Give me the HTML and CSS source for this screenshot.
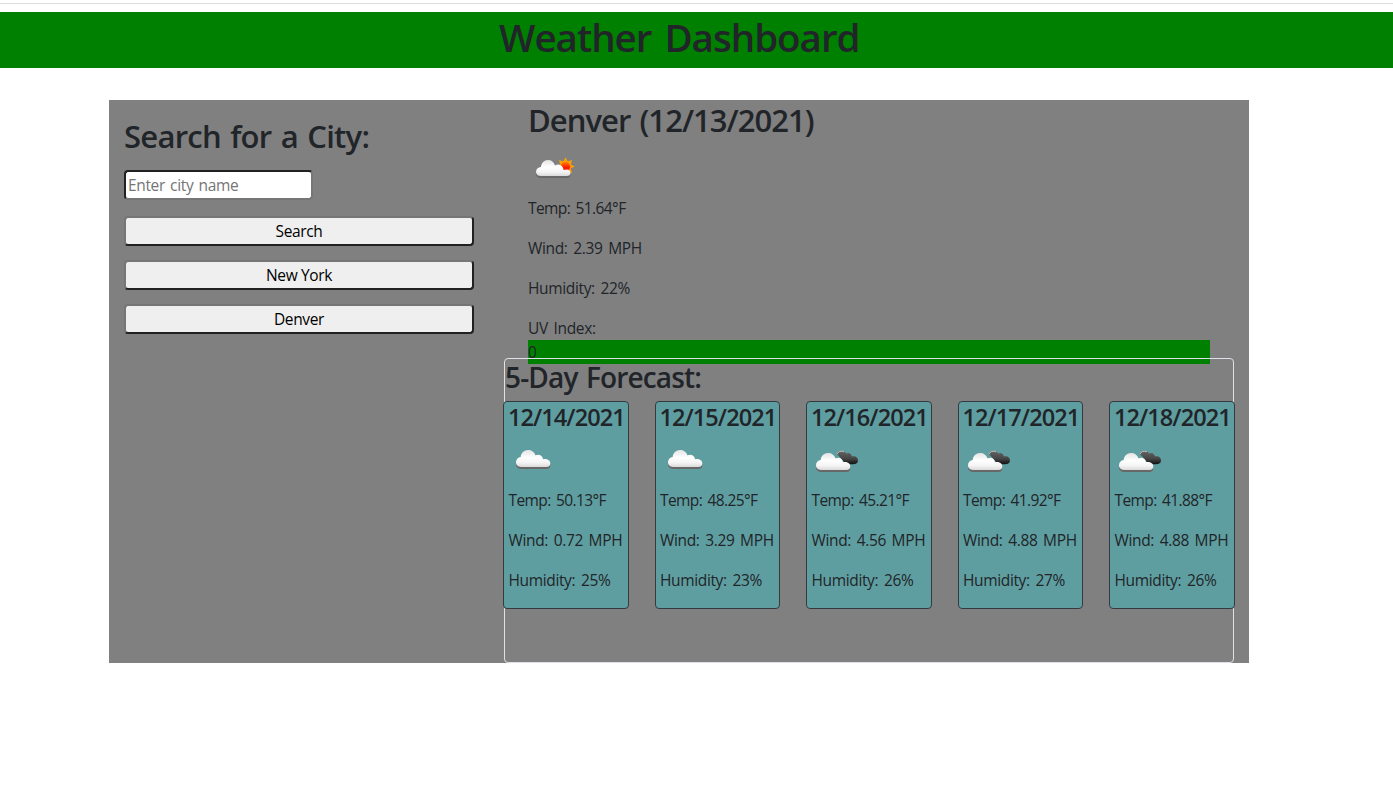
FILE: index.html
```html
<!DOCTYPE html>
<html lang="en">
<head>
<meta charset="utf-8">
<title>Weather Dashboard</title>
<link rel="stylesheet" href="styles.css">
</head>
<body>
<svg class="defs" aria-hidden="true">
  <defs>
    <linearGradient id="white" x1="0" y1="0" x2="0" y2="1"><stop offset="0" stop-color="#e4e4e4"/><stop offset=".45" stop-color="#fff"/><stop offset=".75" stop-color="#f4f4f4"/><stop offset="1" stop-color="#dadada"/></linearGradient>
    <linearGradient id="dark" x1="0" y1="0" x2="0" y2="1"><stop offset="0" stop-color="#666"/><stop offset=".6" stop-color="#444"/><stop offset="1" stop-color="#111"/></linearGradient>
    <linearGradient id="sun" x1="0" y1="0" x2="0" y2="1"><stop offset="0" stop-color="#ff8a00"/><stop offset=".6" stop-color="#ff1800"/></linearGradient>
    <path id="cloud" d="M5 17C2 17 0 15 0 12.300C0 9.300 2 7.300 4.700 7C5 3 8 0 12 0C15.500 0 18.500 2 19.300 5.300C23 3.500 26.800 5.500 27 9.300C31 8.500 34.300 10.500 34.300 13.500C34.300 15.700 33 17 30.500 17Z"/>
    <symbol id="cloudy" viewBox="0 0 50 50">
      <use href="#cloud" x="8" y="17" fill="#686868"/>
      <use href="#cloud" x="8" y="15" fill="url(#white)"/>
    </symbol>
    <symbol id="sunny" viewBox="0 0 50 50">
      <path fill="#ffa000" d="M46.800 23.500L42.600 25.600L44.100 30.100L39.600 28.600L37.500 32.800L35.400 28.600L30.900 30.100L32.400 25.600L28.200 23.500L32.400 21.400L30.900 16.900L35.400 18.400L37.500 14.200L39.600 18.400L44.100 16.900L42.600 21.400Z"/>
      <circle cx="37.500" cy="23.500" r="5" fill="url(#sun)" stroke="#ffa000"/>
      <path fill="#686868" transform="translate(0 2)" d="M13 33C10 33 8 31.500 8 28.700C8 26 10 24.500 13 24C13.300 20 16 17 20 17C23.500 17 26 19 27 22.500C31 20 35.500 23 35.500 27C39.500 25.500 42.500 27 42.500 30C42.500 32 41 33 39 33Z"/>
      <path fill="url(#white)" d="M13 33C10 33 8 31.500 8 28.700C8 26 10 24.500 13 24C13.300 20 16 17 20 17C23.500 17 26 19 27 22.500C31 20 35.500 23 35.500 27C39.500 25.500 42.500 27 42.500 30C42.500 32 41 33 39 33Z"/>
    </symbol>
    <symbol id="broken" viewBox="0 0 50 50">
      <path fill="url(#dark)" d="M26 19C26.500 16.500 28.500 15.500 31 15.800C33 16 34.500 17 35 18.500C38 17 40.500 19 41 21.500C44.500 20.500 47 22.500 47 25.500C47 28 45 29.300 42 29.300H35Z"/>
      <path fill="none" stroke="#c4c4c4" d="M26 19C27 16.500 30 15.500 33 16.700"/>
      <use href="#cloud" x="5" y="20" fill="#686868"/>
      <use href="#cloud" x="5" y="18" fill="url(#white)"/>
    </symbol>
  </defs>
</svg>
<div class="rule"></div>
<header class="banner"><h1>Weather Dashboard</h1></header>
<main class="dashboard">
  <aside class="search">
    <h2>Search for a City:</h2>
    <input class="field" type="text" placeholder="Enter city name">
    <button>Search</button>
    <button>New York</button>
    <button>Denver</button>
  </aside>
  <section class="weather">
    <div class="current">
      <h2 class="city">Denver (12/13/2021)</h2>
      <svg class="icon"><use href="#sunny"/></svg>
      <p class="temp">Temp: 51.64°F</p>
      <p>Wind: 2.39 MPH</p>
      <p>Humidity: 22%</p>
      <p class="uv">UV Index:</p>
      <div class="uv-value">0</div>
    </div>
    <div class="forecast">
      <h3>5-Day Forecast:</h3>
      <div class="days">
        <article class="day"><h4>12/14/2021</h4><svg class="icon"><use href="#cloudy"/></svg><p class="temp">Temp: 50.13°F</p><p>Wind: 0.72 MPH</p><p>Humidity: 25%</p></article>
        <article class="day"><h4>12/15/2021</h4><svg class="icon"><use href="#cloudy"/></svg><p class="temp">Temp: 48.25°F</p><p>Wind: 3.29 MPH</p><p>Humidity: 23%</p></article>
        <article class="day"><h4>12/16/2021</h4><svg class="icon"><use href="#broken"/></svg><p class="temp">Temp: 45.21°F</p><p>Wind: 4.56 MPH</p><p>Humidity: 26%</p></article>
        <article class="day"><h4>12/17/2021</h4><svg class="icon"><use href="#broken"/></svg><p class="temp">Temp: 41.92°F</p><p>Wind: 4.88 MPH</p><p>Humidity: 27%</p></article>
        <article class="day"><h4>12/18/2021</h4><svg class="icon"><use href="#broken"/></svg><p class="temp">Temp: 41.88°F</p><p>Wind: 4.88 MPH</p><p>Humidity: 26%</p></article>
      </div>
    </div>
  </section>
</main>
</body>
</html>
```
FILE: styles.css
```css
* { box-sizing: border-box; }
body { margin: 0; padding-top: 3px; background: #fff; color: #212529; font: 400 15.5px/24px "Segoe UI", "Open Sans", sans-serif; letter-spacing: -0.35px; word-spacing: 2px; }
h1, h2, h3, h4, p { margin: 0; white-space: nowrap; }
h1, h2, h3, h4 { font-weight: 600; line-height: 1.2; }
.defs { position: absolute; width: 0; height: 0; }
.rule { height: 1px; background: #ddd; }
.banner { height: 56px; margin-top: 8px; padding: 1px 0 0 499px; background: green; }
h1 { font-size: 38.5px; line-height: 48px; letter-spacing: -1px; word-spacing: 4px; }
.dashboard { display: flex; width: 1140px; height: 563px; margin: 32px 0 0 109px; background: gray; }
.search { display: flex; flex-direction: column; width: 395px; padding: 17px 30px 0 15px; }
.search h2 { font-size: 31px; line-height: 38px; letter-spacing: -0.75px; }
.field { width: 189px; height: 30px; margin: 15px 0 16px; padding: 1px 2px; border: 2px inset #767676; border-radius: 4px; background: #fff; font: inherit; letter-spacing: -0.35px; word-spacing: 1.5px; }
.field::placeholder { color: #757575; }
button { height: 30px; margin-bottom: 14px; padding: 1px 6px; border: 2px outset #767676; border-radius: 4px; background: #efefef; color: #000; font: inherit; letter-spacing: -0.35px; }
.weather { display: flex; flex-direction: column; width: 730px; }
.current { height: 258px; padding: 1px 24px 0; }
.city { font-size: 31px; line-height: 38px; letter-spacing: -0.95px; }
.icon { display: block; width: 50px; height: 50px; }
.current .icon { margin: 4px 0 3px; }
.current p { margin-bottom: 16px; }
p.temp { letter-spacing: -0.6px; }
.current .uv { margin-bottom: 0; }
.uv-value { height: 24px; background: green; }
.forecast { position: relative; height: 305px; border: 1px solid #dee2e6; border-radius: 4px; }
.forecast h3 { font-size: 28px; letter-spacing: -0.85px; padding-top: 2px; height: 42px; }
.days { display: flex; justify-content: space-between; margin: 0 -1.6px 0 -1.55px; }
.day { width: 125.1px; height: 208px; padding: 1px 4px; border: 1px solid #343a40; border-radius: 4px; background: cadetblue; }
.day h4 { margin-left: -0.5px; font-size: 23.5px; line-height: 29px; letter-spacing: -0.9px; }
.day .icon { margin: 3px 0; }
.day p { margin-bottom: 16px; }
```
